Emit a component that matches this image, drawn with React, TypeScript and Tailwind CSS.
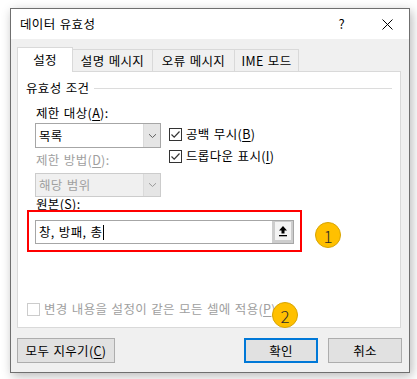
import React from 'react';

const Mn = ({ children }: { children: React.ReactNode }) => (
  <span className="underline underline-offset-2 decoration-1">{children}</span>
);

const CheckBox = ({ checked, disabled }: { checked?: boolean; disabled?: boolean }) => (
  <div
    className={`w-[13px] h-[13px] border bg-white flex items-center justify-center shrink-0 ${
      disabled ? 'border-[#cccccc]' : 'border-[#333333]'
    }`}
  >
    {checked && (
      <svg width="11" height="11" viewBox="0 0 11 11">
        <path d="M1.5 5.5 L4.2 8.2 L9.5 2.5" fill="none" stroke="#333" strokeWidth="1.2" />
      </svg>
    )}
  </div>
);

const Chevron = ({ color }: { color: string }) => (
  <svg width="9" height="6" viewBox="0 0 9 6">
    <path d="M1 1.2 L4.5 4.5 L8 1.2" fill="none" stroke={color} strokeWidth="1" />
  </svg>
);

const Combo = ({ text, disabled }: { text: string; disabled?: boolean }) => (
  <div
    className={`w-[126px] flex border ${
      disabled ? 'h-[24px] border-[#cccccc] bg-[#f0f0f0] text-[#a0a0a0]' : 'h-[25px] border-[#a6a6a6] bg-white'
    }`}
  >
    <div className="flex-1 flex items-center pl-[3px]">{text}</div>
    <div className="w-[17px] bg-[#e5e5e5] border-l border-[#dadada] flex items-center justify-center">
      <Chevron color={disabled ? '#9a9a9a' : '#606060'} />
    </div>
  </div>
);

const Marker = ({ n }: { n: string }) => (
  <div className="w-[26px] h-[26px] rounded-full bg-[#ffc000] border border-[#d8a400] flex items-center justify-center text-[17px] leading-none tracking-normal text-[#2b2b2b] font-light">
    {n}
  </div>
);

export default function App() {
  return (
    <div className="w-[417px] h-[379px] bg-white pl-[10px] pt-[8px] text-[12.5px] tracking-[0.35px] [word-spacing:1px] leading-[16px] text-black font-['Noto_Sans_CJK_KR',sans-serif]">
      <div className="w-[400px] h-[365px] border border-[#6f6f6f] bg-[#f0f0f0] flex flex-col shadow-[2px_3px_10px_rgba(0,0,0,0.28)]">
        {/* Title bar */}
        <div className="h-[30px] shrink-0 bg-white flex items-center pl-[9px] pr-[16px]">
          <span className="flex-1">데이터 유효성</span>
          <span className="text-[13px] mr-[37px]">?</span>
          <svg width="11" height="11" viewBox="0 0 11 11">
            <path d="M0.5 0.5 L10.5 10.5 M10.5 0.5 L0.5 10.5" stroke="#000" strokeWidth="1" />
          </svg>
        </div>

        <div className="flex flex-col pl-[6px] pt-[8px]">
          {/* Tabs */}
          <div className="flex items-end h-[25px]">
            <div className="w-[56px] h-[25px] border border-b-0 border-[#d9d9d9] bg-white relative z-10 flex items-center justify-center">
              설정
            </div>
            <div className="-ml-px w-[81px] h-[23px] border border-[#d9d9d9] flex items-center justify-center">
              설명 메시지
            </div>
            <div className="-ml-px w-[83px] h-[23px] border border-[#d9d9d9] flex items-center justify-center">
              오류 메시지
            </div>
            <div className="-ml-px w-[65px] h-[23px] border border-[#d9d9d9] flex items-center justify-center">
              IME 모드
            </div>
          </div>

          {/* Panel */}
          <div className="-mt-px w-[384px] h-[257px] border border-[#d9d9d9] bg-white relative flex flex-col">
            <div className="mt-[8px] h-[16px] flex items-center pl-[8px]">
              <span>유효성 조건</span>
              <div className="flex-1 h-px bg-[#dcdcdc] ml-[5px] mr-[8px]" />
            </div>

            <div className="mt-[9px] flex pl-[17px]">
              <div className="flex flex-col w-[126px]">
                <div className="h-[16px] pl-px">
                  제한 대상(<Mn>A</Mn>):
                </div>
                <div className="mt-[2px]">
                  <Combo text="목록" />
                </div>
                <div className="mt-[4px] h-[16px] pl-px text-[#a0a0a0]">
                  제한 방법(<Mn>D</Mn>):
                </div>
                <div className="mt-[5px]">
                  <Combo text="해당 범위" disabled />
                </div>
              </div>
              <div className="ml-[8px] pt-[21px] flex flex-col gap-[6px]">
                <div className="h-[16px] flex items-center gap-[4px]">
                  <CheckBox checked />
                  <span>
                    공백 무시(<Mn>B</Mn>)
                  </span>
                </div>
                <div className="h-[16px] flex items-center gap-[4px]">
                  <CheckBox checked />
                  <span>
                    드롭다운 표시(<Mn>I</Mn>)
                  </span>
                </div>
              </div>
            </div>

            <div className="h-[13px] leading-[13px] pl-[18px]">
              원본(<Mn>S</Mn>):
            </div>

            <div className="flex items-start pl-[9px]">
              <div className="w-[275px] h-[42px] border-2 border-[#ff0000] pl-[6px] pt-[8px]">
                <div className="w-[259px] h-[24px] border border-[#a6a6a6] bg-white flex items-center">
                  <div className="flex-1 flex items-center pl-[3px]">
                    <span>창, 방패, 총</span>
                    <span className="w-px h-[15px] bg-black ml-px" />
                  </div>
                  <div className="w-[21px] h-[22px] bg-[#cdcdcd] pt-[1px] pl-[3px] pr-[2px] pb-[3px]">
                    <div className="w-full h-full bg-[#f4f4f4] flex items-center justify-center">
                      <svg width="10" height="12" viewBox="0 0 10 12">
                        <path d="M5 1 L1 5.5 L3.5 5.5 L3.5 8.5 L6.5 8.5 L6.5 5.5 L9 5.5 Z" fill="#000" />
                        <rect x="1" y="10" width="8" height="1.3" fill="#000" />
                      </svg>
                    </div>
                  </div>
                </div>
              </div>
              <div className="ml-[13px] mt-[12px]">
                <Marker n="1" />
              </div>
            </div>

            <div className="flex-1" />

            <div className="h-[16px] flex items-center gap-[4px] pl-[9px] mb-[10px] text-[#a0a0a0]">
              <CheckBox disabled />
              <span className="whitespace-nowrap">
                변경 내용을 설정이 같은 모든 셀에 적용(<Mn>P</Mn>)
              </span>
            </div>

            <div className="absolute left-[254px] top-[230px]">
              <Marker n="2" />
            </div>
          </div>

          {/* Buttons */}
          <div className="mt-[10px] flex pr-[7px]">
            <div className="w-[98px] h-[25px] bg-[#e1e1e1] border border-[#adadad] flex items-center justify-center">
              모두 지우기(<Mn>C</Mn>)
            </div>
            <div className="flex-1" />
            <div className="w-[74px] h-[25px] bg-[#e1e1e1] border-2 border-[#0078d7] flex items-center justify-center">
              확인
            </div>
            <div className="ml-[10px] w-[74px] h-[25px] bg-[#e1e1e1] border border-[#adadad] flex items-center justify-center">
              취소
            </div>
          </div>
        </div>
      </div>
    </div>
  );
}
